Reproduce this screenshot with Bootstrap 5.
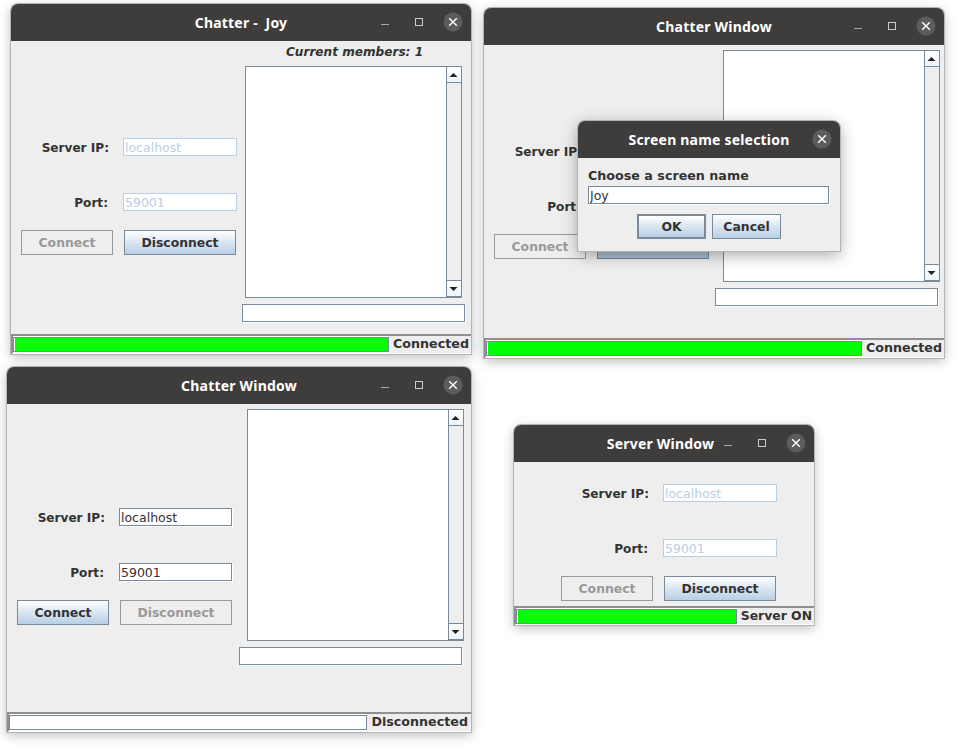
<!DOCTYPE html>
<html lang="en">
<head>
    <meta charset="UTF-8">
    <meta name="viewport" content="width=device-width, initial-scale=1.0">
    <title>Chatter windows</title>
    <link rel="stylesheet" href="https://cdn.jsdelivr.net/npm/bootstrap@5.3.0/dist/css/bootstrap.min.css">
    <style>
        body {
            background: #fff;
            margin: 0;
            font-family: "DejaVu Sans", sans-serif;
            font-size: 13px;
            color: #333;
        }
        .desk {
            position: relative;
            width: 980px;
            height: 750px;
            overflow: hidden;
        }
        .app-win {
            position: absolute;
            background: #eee;
            border-radius: 7px 7px 0 0;
            box-shadow: 0 0 0 1px #b4b4b4, 0 3px 12px rgba(0, 0, 0, .28);
        }
        #winMember { left: 11px; top: 4px; width: 460px; height: 350px; }
        #winChat { left: 484px; top: 8px; width: 460px; height: 350px; }
        #winIdle { left: 7px; top: 367px; width: 464px; height: 365px; }
        #winServer { left: 514px; top: 425px; width: 300px; height: 200px; }
        #winDialog { left: 578px; top: 121px; width: 262px; height: 130px; box-shadow: 0 0 0 1px #b4b4b4, 0 4px 16px rgba(0, 0, 0, .35); }

        .app-title {
            position: relative;
            flex: 0 0 37px;
            background: #3f3d3b;
            color: #fff;
            border-radius: 7px 7px 0 0;
            font: 700 14px "Noto Sans", sans-serif;
            letter-spacing: .2px;
        }
        #winServer .app-title { padding-right: 7px; }
        .win-ctrls {
            position: absolute;
            right: 8px;
            top: 8px;
            gap: 14px;
        }
        .win-ctrls svg { display: block; }

        .form-area {
            display: grid;
            grid-template-columns: 92px 114px;
            column-gap: 10px;
            row-gap: 37px;
            align-content: start;
            align-items: center;
            flex: 0 0 auto;
            padding-left: 10px;
        }
        #winMember .form-area, #winChat .form-area { padding-top: 97px; width: 231px; }
        #winIdle .form-area { padding-top: 104px; width: 232px; grid-template-columns: 92px 113px; }
        #winServer .form-area { padding: 22px 0 0 47px; }
        .form-label-j {
            font-weight: 700;
            font-size: 12.1px;
            line-height: 16px;
            padding: 2px 4px 0 0;
            text-align: right;
        }
        .form-label-j.port-lbl { padding-right: 5px; }
        .swing-input, .swing-input:disabled {
            height: 18px;
            min-height: 0;
            padding: 0 1px;
            font: 12.5px "DejaVu Sans", sans-serif;
            color: #333;
            background: #fff;
            border-radius: 0;
            border: 1px solid #7a8a99;
            box-shadow: 1px 1px 0 #fff;
        }
        .swing-input:disabled {
            color: #b8cfe5;
            border-color: #b8cfe5;
            box-shadow: none;
        }
        .btn-line {
            grid-column: 1 / 3;
            margin-top: -18px;
            gap: 11px;
        }
        .swing-btn, .swing-btn:disabled {
            width: 92px;
            height: 25px;
            padding: 0;
            font: 700 12.4px "DejaVu Sans", sans-serif;
            color: #333;
            border-radius: 0;
            border: 1px solid #7a8a99;
            background: linear-gradient(#fff, #dde8f3 45%, #b8cfe5);
        }
        .swing-btn:disabled {
            color: #999;
            border-color: #999;
            background: #eee;
            opacity: 1;
        }
        .swing-btn.wide { width: 112px; }
        .swing-btn.pressed { background: #aebfd3; }

        .chat-col { width: 223px; }
        .members {
            height: 25px;
            padding: 3px 0 0 2px;
            font-weight: 700;
            font-style: italic;
            font-size: 12.1px;
            line-height: 17px;
            text-align: center;
        }
        .chat-log {
            height: 232px;
            width: 217px;
            background: #fff;
            border: 1px solid #7a8a99;
            border-right: 0;
            margin-left: 3px;
        }
        #winChat .chat-log, #winIdle .chat-log { margin-left: 8px; margin-top: 5px; }
        .log-text { min-width: 0; }
        .scroll-j {
            flex: 0 0 16px;
            background: #eee;
            border-left: 1px solid #7a8a99;
            border-right: 1px solid #7a8a99;
            border-bottom: 1px solid #7a8a99;
        }
        .scroll-btn {
            height: 16px;
            background: linear-gradient(#fff, #eef3f8);
        }
        .scroll-btn.up { border-bottom: 1px solid #7a8a99; }
        .scroll-btn.down { border-top: 1px solid #7a8a99; }
        .scroll-btn svg { display: block; }
        .chat-input {
            width: 223px;
            margin-top: 6px;
        }

        .status-j {
            margin-top: auto;
            height: 20px;
            border-top: 2px solid #8f8f8f;
            border-left: 2px solid #8f8f8f;
            border-bottom: 1px solid #fff;
            background: #fff;
        }
        #winServer .status-j { height: 19px; }
        .swing-bar {
            flex: 1 1 auto;
            height: 15px;
            padding-left: 1px;
            background: #fff;
            border: 1px solid #7a8a99;
            border-radius: 0;
        }
        .swing-bar .progress-bar { background: #0f0; }
        .status-text {
            flex: 0 0 auto;
            align-self: stretch;
            background: #eee;
            padding: 0 2px 0 4px;
            font-weight: 700;
            font-size: 12.7px;
            line-height: 16px;
        }
        #winIdle .status-text { padding-right: 3px; }
        #winServer .status-text { font-size: 12.4px; line-height: 15px; }

        .dlg-body { padding: 9px 11px 0 10px; }
        .dlg-label { font-weight: 700; font-size: 12.7px; line-height: 17px; height: 19px; }
        .dlg-input { width: 241px; }
        .dlg-btns { margin-top: 10px; gap: 6px; padding-left: 1px; }
        .swing-btn.dlg-btn { width: 69px; }
        .swing-btn.dflt { border: 2px solid #7a8a99; }
    </style>
</head>
<body>

<div class="desk">

    <!-- connected client -->
    <div class="app-win d-flex flex-column" id="winMember">
        <div class="app-title d-flex align-items-center justify-content-center">
            <span>Chatter -&nbsp; Joy</span>
            <div class="win-ctrls d-flex align-items-center">
                <svg width="20" height="20" viewBox="0 0 20 20"><path d="M6 12.5h8" stroke="#aaa" stroke-width="1"/></svg>
                <svg width="20" height="20" viewBox="0 0 20 20"><rect x="6.5" y="6.5" width="7" height="7" fill="none" stroke="#ccc"/></svg>
                <svg width="20" height="20" viewBox="0 0 20 20"><circle cx="10" cy="10" r="9.5" fill="#5e5c5a"/><path d="M6.2 6.2l7.6 7.6M13.8 6.2l-7.6 7.6" stroke="#fff" stroke-width="1.4"/></svg>
            </div>
        </div>
        <div class="d-flex">
            <div class="form-area">
                <div class="form-label-j">Server IP:</div>
                <input class="form-control swing-input" value="localhost" disabled>
                <div class="form-label-j port-lbl">Port:</div>
                <input class="form-control swing-input" value="59001" disabled>
                <div class="btn-line d-flex">
                    <button class="btn swing-btn" disabled>Connect</button>
                    <button class="btn swing-btn wide">Disconnect</button>
                </div>
            </div>
            <div class="chat-col">
                <div class="members">Current members: 1</div>
                <div class="chat-log d-flex">
                    <div class="log-text flex-grow-1"></div>
                    <div class="scroll-j d-flex flex-column justify-content-between">
                        <div class="scroll-btn up"><svg width="14" height="15" viewBox="0 0 14 15"><path d="M2.5 10l4-4 4 4z" fill="#222"/></svg></div>
                        <div class="scroll-btn down"><svg width="14" height="15" viewBox="0 0 14 15"><path d="M2.5 6l4 4 4-4z" fill="#222"/></svg></div>
                    </div>
                </div>
                <input class="form-control swing-input chat-input">
            </div>
        </div>
        <div class="status-j d-flex align-items-center">
            <div class="progress swing-bar"><div class="progress-bar" style="width: 100%"></div></div>
            <div class="status-text">Connected</div>
        </div>
    </div>

    <!-- client asking for a screen name -->
    <div class="app-win d-flex flex-column" id="winChat">
        <div class="app-title d-flex align-items-center justify-content-center">
            <span>Chatter Window</span>
            <div class="win-ctrls d-flex align-items-center">
                <svg width="20" height="20" viewBox="0 0 20 20"><path d="M6 12.5h8" stroke="#aaa" stroke-width="1"/></svg>
                <svg width="20" height="20" viewBox="0 0 20 20"><rect x="6.5" y="6.5" width="7" height="7" fill="none" stroke="#ccc"/></svg>
                <svg width="20" height="20" viewBox="0 0 20 20"><circle cx="10" cy="10" r="9.5" fill="#5e5c5a"/><path d="M6.2 6.2l7.6 7.6M13.8 6.2l-7.6 7.6" stroke="#fff" stroke-width="1.4"/></svg>
            </div>
        </div>
        <div class="d-flex">
            <div class="form-area">
                <div class="form-label-j">Server IP:</div>
                <input class="form-control swing-input" value="localhost" disabled>
                <div class="form-label-j port-lbl">Port:</div>
                <input class="form-control swing-input" value="59001" disabled>
                <div class="btn-line d-flex">
                    <button class="btn swing-btn" disabled>Connect</button>
                    <button class="btn swing-btn wide pressed">Disconnect</button>
                </div>
            </div>
            <div class="chat-col">
                <div class="chat-log d-flex">
                    <div class="log-text flex-grow-1"></div>
                    <div class="scroll-j d-flex flex-column justify-content-between">
                        <div class="scroll-btn up"><svg width="14" height="15" viewBox="0 0 14 15"><path d="M2.5 10l4-4 4 4z" fill="#222"/></svg></div>
                        <div class="scroll-btn down"><svg width="14" height="15" viewBox="0 0 14 15"><path d="M2.5 6l4 4 4-4z" fill="#222"/></svg></div>
                    </div>
                </div>
                <input class="form-control swing-input chat-input">
            </div>
        </div>
        <div class="status-j d-flex align-items-center">
            <div class="progress swing-bar"><div class="progress-bar" style="width: 100%"></div></div>
            <div class="status-text">Connected</div>
        </div>
    </div>

    <!-- disconnected client -->
    <div class="app-win d-flex flex-column" id="winIdle">
        <div class="app-title d-flex align-items-center justify-content-center">
            <span>Chatter Window</span>
            <div class="win-ctrls d-flex align-items-center">
                <svg width="20" height="20" viewBox="0 0 20 20"><path d="M6 12.5h8" stroke="#aaa" stroke-width="1"/></svg>
                <svg width="20" height="20" viewBox="0 0 20 20"><rect x="6.5" y="6.5" width="7" height="7" fill="none" stroke="#ccc"/></svg>
                <svg width="20" height="20" viewBox="0 0 20 20"><circle cx="10" cy="10" r="9.5" fill="#5e5c5a"/><path d="M6.2 6.2l7.6 7.6M13.8 6.2l-7.6 7.6" stroke="#fff" stroke-width="1.4"/></svg>
            </div>
        </div>
        <div class="d-flex">
            <div class="form-area">
                <div class="form-label-j">Server IP:</div>
                <input class="form-control swing-input" value="localhost">
                <div class="form-label-j port-lbl">Port:</div>
                <input class="form-control swing-input" value="59001">
                <div class="btn-line d-flex">
                    <button class="btn swing-btn">Connect</button>
                    <button class="btn swing-btn wide" disabled>Disconnect</button>
                </div>
            </div>
            <div class="chat-col">
                <div class="chat-log d-flex">
                    <div class="log-text flex-grow-1"></div>
                    <div class="scroll-j d-flex flex-column justify-content-between">
                        <div class="scroll-btn up"><svg width="14" height="15" viewBox="0 0 14 15"><path d="M2.5 10l4-4 4 4z" fill="#222"/></svg></div>
                        <div class="scroll-btn down"><svg width="14" height="15" viewBox="0 0 14 15"><path d="M2.5 6l4 4 4-4z" fill="#222"/></svg></div>
                    </div>
                </div>
                <input class="form-control swing-input chat-input">
            </div>
        </div>
        <div class="status-j d-flex align-items-center">
            <div class="progress swing-bar"><div class="progress-bar" style="width: 0%"></div></div>
            <div class="status-text">Disconnected</div>
        </div>
    </div>

    <!-- server -->
    <div class="app-win d-flex flex-column" id="winServer">
        <div class="app-title d-flex align-items-center justify-content-center">
            <span>Server Window</span>
            <div class="win-ctrls d-flex align-items-center">
                <svg width="20" height="20" viewBox="0 0 20 20"><path d="M6 12.5h8" stroke="#aaa" stroke-width="1"/></svg>
                <svg width="20" height="20" viewBox="0 0 20 20"><rect x="6.5" y="6.5" width="7" height="7" fill="none" stroke="#ccc"/></svg>
                <svg width="20" height="20" viewBox="0 0 20 20"><circle cx="10" cy="10" r="9.5" fill="#5e5c5a"/><path d="M6.2 6.2l7.6 7.6M13.8 6.2l-7.6 7.6" stroke="#fff" stroke-width="1.4"/></svg>
            </div>
        </div>
        <div class="form-area">
            <div class="form-label-j">Server IP:</div>
            <input class="form-control swing-input" value="localhost" disabled>
            <div class="form-label-j port-lbl">Port:</div>
            <input class="form-control swing-input" value="59001" disabled>
            <div class="btn-line d-flex">
                <button class="btn swing-btn" disabled>Connect</button>
                <button class="btn swing-btn wide">Disconnect</button>
            </div>
        </div>
        <div class="status-j d-flex align-items-center">
            <div class="progress swing-bar"><div class="progress-bar" style="width: 100%"></div></div>
            <div class="status-text">Server ON</div>
        </div>
    </div>

    <!-- screen name dialog, over the second window -->
    <div class="app-win d-flex flex-column" id="winDialog">
        <div class="app-title d-flex align-items-center justify-content-center">
            <span>Screen name selection</span>
            <div class="win-ctrls d-flex align-items-center">
                <svg width="20" height="20" viewBox="0 0 20 20"><circle cx="10" cy="10" r="9.5" fill="#5e5c5a"/><path d="M6.2 6.2l7.6 7.6M13.8 6.2l-7.6 7.6" stroke="#fff" stroke-width="1.4"/></svg>
            </div>
        </div>
        <div class="dlg-body">
            <div class="dlg-label">Choose a screen name</div>
            <input class="form-control swing-input dlg-input" value="Joy">
            <div class="dlg-btns d-flex justify-content-center">
                <button class="btn swing-btn dlg-btn dflt">OK</button>
                <button class="btn swing-btn dlg-btn">Cancel</button>
            </div>
        </div>
    </div>

</div>

<script src="https://cdn.jsdelivr.net/npm/bootstrap@5.3.0/dist/js/bootstrap.bundle.min.js"></script>
</body>
</html>
